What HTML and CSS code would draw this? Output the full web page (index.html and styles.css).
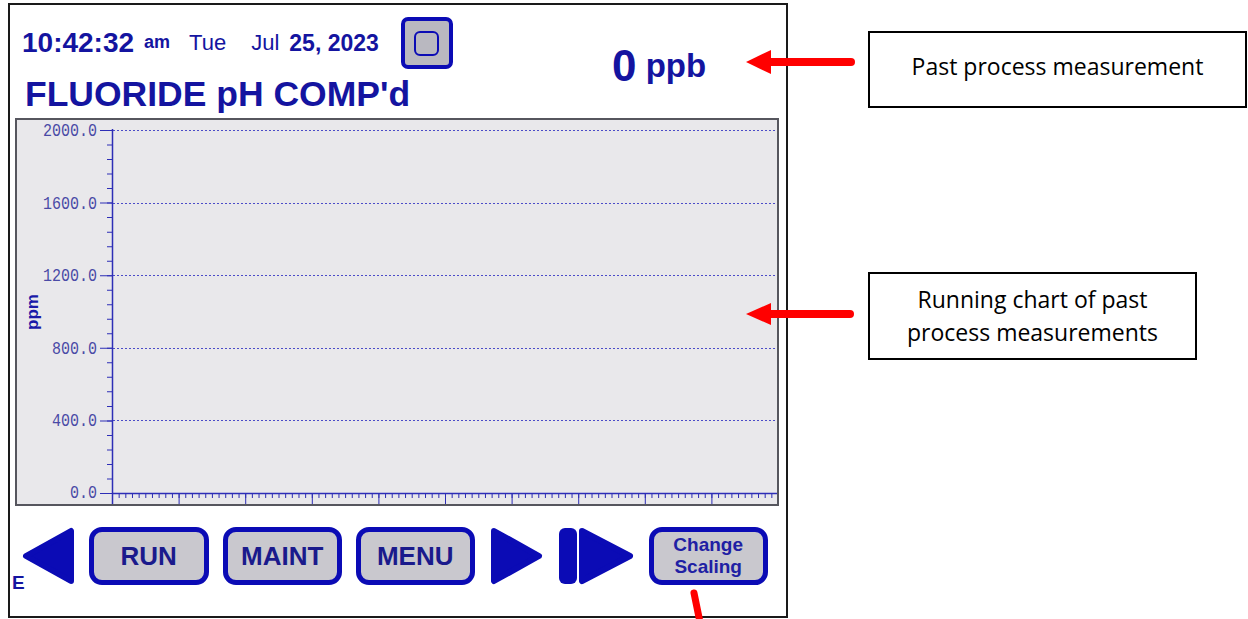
FILE: index.html
```html
<!DOCTYPE html>
<html lang="en">

<head>
    <meta charset="UTF-8">
    <meta name="viewport" content="width=device-width, initial-scale=1.0">
    <title>FLUORIDE pH COMP'd - chart screen</title>
    <link rel="stylesheet" href="styles.css">
</head>

<body>
    <div id="page">
        <div id="screen">
            <div class="head">
                <div class="head-left">
                    <div class="clock-row">
                        <span class="time">10:42:32</span>
                        <span class="ampm">am</span>
                        <span class="day">Tue</span>
                        <span class="month">Jul</span>
                        <span class="date">25, 2023</span>
                        <div class="square-btn">
                            <div class="square-inner"></div>
                        </div>
                    </div>
                    <div class="title">FLUORIDE pH COMP'd</div>
                </div>
                <div class="reading"><span class="value">0</span> <span class="unit">ppb</span></div>
            </div>

            <div class="chart">
                <svg width="760" height="384" viewBox="0 0 760 384">
                    <!-- grid -->
                    <g stroke="#4c4cc8" stroke-width="1" stroke-dasharray="2 2">
                        <line x1="96" y1="10.5" x2="760" y2="10.5" />
                        <line x1="96" y1="83.5" x2="760" y2="83.5" />
                        <line x1="96" y1="155.5" x2="760" y2="155.5" />
                        <line x1="96" y1="228.5" x2="760" y2="228.5" />
                        <line x1="96" y1="300.5" x2="760" y2="300.5" />
                    </g>
                    <!-- axes and ticks -->
                    <g stroke="#2e2eb6">
                        <line x1="95.5" y1="9" x2="95.5" y2="384" stroke-width="1.5" />
                        <line x1="95" y1="373.5" x2="761" y2="373.5" stroke-width="1.5" />
                        <line x1="92.5" y1="10" x2="92.5" y2="374" stroke-width="5" stroke-dasharray="1 13.52" />
                        <line x1="89" y1="10" x2="89" y2="374" stroke-width="12" stroke-dasharray="1 71.6" />
                        <line x1="95" y1="375.5" x2="761" y2="375.5" stroke-width="5" stroke-dasharray="1 5.66" />
                        <line x1="95" y1="378.5" x2="762" y2="378.5" stroke-width="11" stroke-dasharray="1 65.6" />
                    </g>
                    <g class="ylabels" text-anchor="end">
                        <text x="80" y="16" textLength="54" lengthAdjust="spacingAndGlyphs">2000.0</text>
                        <text x="80" y="89" textLength="54" lengthAdjust="spacingAndGlyphs">1600.0</text>
                        <text x="80" y="161" textLength="54" lengthAdjust="spacingAndGlyphs">1200.0</text>
                        <text x="80" y="234" textLength="45" lengthAdjust="spacingAndGlyphs">800.0</text>
                        <text x="80" y="306" textLength="45" lengthAdjust="spacingAndGlyphs">400.0</text>
                        <text x="80" y="378" textLength="27" lengthAdjust="spacingAndGlyphs">0.0</text>
                    </g>
                    <text class="yunit" transform="translate(21 192) rotate(-90)" text-anchor="middle">ppm</text>
                </svg>
            </div>

            <div class="nav">
                <span class="status">E</span>
                <svg class="tri tri-left" width="53" height="58" viewBox="0 0 53 58">
                    <polygon points="5,29 50,4 50,54" />
                </svg>
                <div class="btn btn-run">RUN</div>
                <div class="btn btn-maint">MAINT</div>
                <div class="btn btn-menu">MENU</div>
                <svg class="tri tri-right" width="52" height="58" viewBox="0 0 52 58">
                    <polygon points="3,4 48,29 3,54" />
                </svg>
                <svg class="tri tri-end" width="76" height="58" viewBox="0 0 76 58">
                    <rect x="1" y="1" width="18" height="56" rx="6" />
                    <polygon points="24,4 72,29 24,54" />
                </svg>
                <div class="btn btn-scale">Change<br>Scaling</div>
            </div>
        </div>

        <div class="callout callout-1">Past process measurement</div>
        <div class="callout callout-2">Running chart of past<br>process measurements</div>

        <svg class="pointers" width="1248" height="619" viewBox="0 0 1248 619">
            <g fill="#ff0000" stroke="#ff0000" stroke-linecap="round">
                <line x1="851" y1="62" x2="766" y2="62" stroke-width="8" />
                <polygon points="746,62 771,50 771,74" stroke="none" />
                <line x1="850" y1="314" x2="766" y2="314" stroke-width="8" />
                <polygon points="746,314 771,303 771,325" stroke="none" />
                <line x1="694" y1="593" x2="702" y2="632" stroke-width="7" />
            </g>
        </svg>
    </div>
</body>

</html>
```

FILE: styles.css
```css
body {
    margin: 0;
    background: #fff;
}

#page {
    position: relative;
    width: 1248px;
    height: 619px;
    overflow: hidden;
}

#screen {
    box-sizing: border-box;
    width: 780px;
    height: 615px;
    margin: 3px 0 0 8px;
    border: 2px solid #1a1a1a;
    font-family: "Liberation Sans", Arial, sans-serif;
    color: #1414a0;
}

/* header */

.head {
    display: flex;
}

.head-left {
    width: 590px;
    padding-left: 12px;
}

.clock-row {
    display: flex;
    align-items: center;
    height: 52px;
    margin-top: 12px;
}

.time {
    font-size: 28px;
    font-weight: bold;
}

.ampm {
    font-size: 18px;
    font-weight: bold;
    margin-left: 10px;
    margin-top: -2px;
}

.day,
.month {
    font-size: 22px;
}

.day {
    margin-left: 19px;
}

.month {
    margin-left: 25px;
}

.date {
    font-size: 23px;
    font-weight: bold;
    margin-left: 10px;
}

.square-btn {
    box-sizing: border-box;
    width: 52px;
    height: 52px;
    margin-left: 22px;
    border: 4px solid #0b0bb5;
    border-radius: 7px;
    background: #b9b8c0;
    display: flex;
    align-items: center;
    justify-content: center;
}

.square-inner {
    width: 21px;
    height: 21px;
    border: 2.5px solid #0b0bb5;
    border-radius: 6px;
}

.title {
    font-size: 35.5px;
    font-weight: bold;
    line-height: 38px;
    margin: 6px 0 0 3px;
    white-space: nowrap;
}

.reading {
    margin-top: 39px;
    font-size: 33px;
    font-weight: bold;
    line-height: 44px;
    white-space: nowrap;
}

.value {
    font-size: 44px;
}

.unit {
    vertical-align: 4px;
}

/* chart */

.chart {
    box-sizing: border-box;
    width: 764px;
    height: 388px;
    margin: 5px 0 0 5px;
    border: 2px solid #56565e;
    background: #e9e8eb;
}

.chart svg {
    display: block;
}

.ylabels {
    font-family: "Liberation Mono", monospace;
    font-size: 18px;
    fill: #4a4aa6;
}

.yunit {
    font-family: "Liberation Sans", Arial, sans-serif;
    font-size: 17px;
    font-weight: bold;
    fill: #1a1aa8;
}

/* buttons */

.nav {
    display: flex;
    align-items: center;
    height: 58px;
    margin-top: 21px;
}

.status {
    align-self: flex-end;
    margin: 0 0 -9px 2px;
    font-size: 19px;
    font-weight: bold;
}

.tri {
    display: block;
    fill: #0b0bb5;
    stroke: #0b0bb5;
    stroke-width: 6;
    stroke-linejoin: round;
}

.tri rect {
    stroke: none;
}

.tri-left {
    margin-left: -4px;
}

.btn {
    box-sizing: border-box;
    width: 119px;
    height: 58px;
    border: 5px solid #0b0bb5;
    border-radius: 13px;
    background: #c9c8ce;
    color: #1a1a8c;
    font-size: 26px;
    font-weight: bold;
    display: flex;
    align-items: center;
    justify-content: center;
    text-align: center;
}

.btn-run {
    width: 120px;
    margin-left: 15px;
}

.btn-maint,
.btn-menu {
    margin-left: 14px;
}

.tri-right {
    margin-left: 16px;
}

.tri-end {
    margin-left: 15px;
}

.btn-scale {
    margin-left: 15px;
    font-size: 19px;
    line-height: 22px;
    color: #2020a4;
}

/* annotations */

.callout {
    position: absolute;
    box-sizing: border-box;
    border: 2px solid #000;
    display: flex;
    align-items: center;
    justify-content: center;
    text-align: center;
    font-family: "Open Sans", sans-serif;
    font-size: 23px;
    line-height: 33px;
    color: #000;
}

.callout-1 {
    left: 868px;
    top: 31px;
    width: 379px;
    height: 77px;
    padding-bottom: 6px;
}

.callout-2 {
    left: 868px;
    top: 272px;
    width: 329px;
    height: 88px;
}

.pointers {
    position: absolute;
    left: 0;
    top: 0;
    pointer-events: none;
}
```
